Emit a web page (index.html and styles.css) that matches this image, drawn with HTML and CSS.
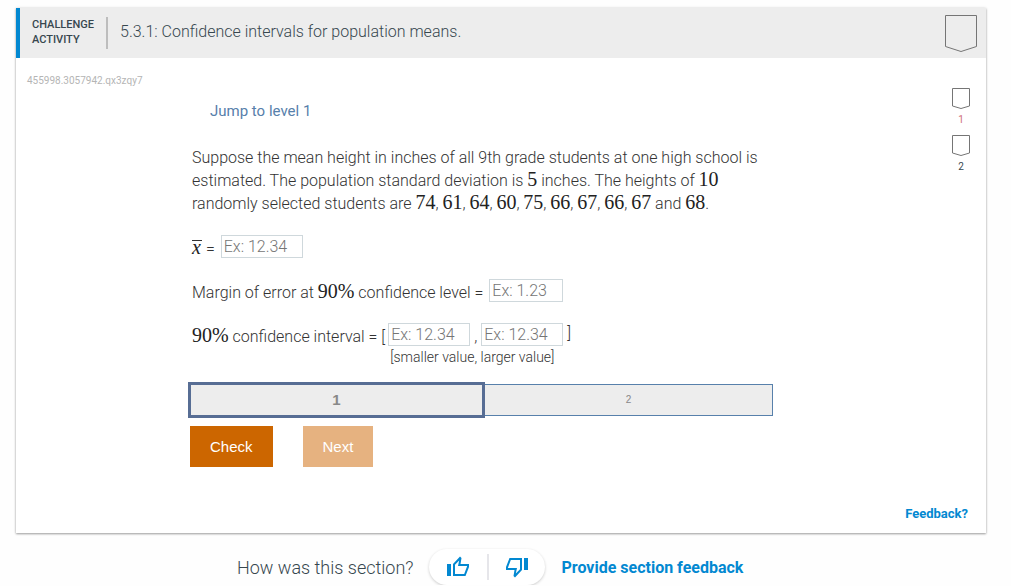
FILE: index.html
```html
<!DOCTYPE html>
<html lang="en">
<head>
<meta charset="utf-8">
<meta name="viewport" content="width=device-width, initial-scale=1">
<title>5.3.1: Confidence intervals for population means.</title>
<link rel="stylesheet" href="styles.css">
</head>
<body>
<main class="page">
  <section class="card">
    <header class="card-header">
      <div class="activity-type">Challenge<br>activity</div>
      <h1 class="activity-title">5.3.1: Confidence intervals for population means.</h1>
      <svg class="badge-large" viewBox="0 0 32 38" aria-hidden="true"><path d="M.5 1.5h31v31L16 37.5.5 32.5z"/></svg>
    </header>
    <div class="card-body">
      <div class="activity-id">455998.3057942.qx3zqy7</div>
      <div class="activity">
        <a class="jump" href="#level-1">Jump to level 1</a>
        <form class="question">
          <p class="prompt">Suppose the mean height in inches of all 9th grade students at one high school is estimated. The population standard deviation is <span class="math">5</span> inches. The heights of <span class="math">10</span> randomly selected students are <span class="math">74</span>, <span class="math">61</span>, <span class="math">64</span>, <span class="math">60</span>, <span class="math">75</span>, <span class="math">66</span>, <span class="math">67</span>, <span class="math">66</span>, <span class="math">67</span> and <span class="math">68</span>.</p>
          <div class="row">
            <label for="mean"><span class="math x-bar">x</span> =</label>
            <input class="answer" id="mean" type="text" placeholder="Ex: 12.34">
          </div>
          <div class="row">
            <label for="margin">Margin of error at <span class="math">90%</span> confidence level =</label>
            <input class="answer answer-short" id="margin" type="text" placeholder="Ex: 1.23">
          </div>
          <div class="row row-interval">
            <label for="lower"><span class="math">90%</span> confidence interval = [</label>
            <div class="interval">
              <div class="interval-fields">
                <input class="answer" id="lower" type="text" placeholder="Ex: 12.34">
                <span class="comma">,</span>
                <input class="answer" type="text" placeholder="Ex: 12.34" aria-label="Larger value">
                <span class="bracket">]</span>
              </div>
              <div class="hint">[smaller value, larger value]</div>
            </div>
          </div>
        </form>
        <div class="levels">
          <div class="level level-current">1</div>
          <div class="level">2</div>
        </div>
        <div class="actions">
          <button class="button" type="button">Check</button>
          <button class="button button-next" type="button" disabled>Next</button>
        </div>
      </div>
      <div class="rail">
        <div class="step step-current"><svg class="badge" viewBox="0 0 18 22" aria-hidden="true"><path d="M.5.5h17v17.5L9 20.5.5 18z"/></svg>1</div>
        <div class="step"><svg class="badge" viewBox="0 0 18 22" aria-hidden="true"><path d="M.5.5h17v17.5L9 20.5.5 18z"/></svg>2</div>
      </div>
    </div>
    <footer class="card-footer"><a class="feedback" href="#feedback">Feedback?</a></footer>
  </section>
  <section class="rating">
    <span class="rating-text">How was this section?</span>
    <div class="thumbs">
      <button class="thumb" type="button" aria-label="Thumbs up"><svg viewBox="0 0 24 24"><path d="M1 9h4v12H1zM23 10v2l-3.5 9H7V9l7-7.5 1.5 1.5L14.5 9H23zM9 9.8V19h9.2l2.8-7.4V11h-9l1.2-5.4z"/></svg></button>
      <button class="thumb thumb-down" type="button" aria-label="Thumbs down"><svg viewBox="0 0 24 24"><path d="M1 9h4v12H1zM23 10v2l-3.5 9H7V9l7-7.5 1.5 1.5L14.5 9H23zM9 9.8V19h9.2l2.8-7.4V11h-9l1.2-5.4z"/></svg></button>
    </div>
    <a class="section-feedback" href="#section-feedback">Provide section feedback</a>
  </section>
</main>
</body>
</html>
```

FILE: styles.css
```css
* {
  box-sizing: border-box;
}

body {
  margin: 0;
  background: #fefefe;
  color: #37474f;
  font-family: Roboto, sans-serif;
  font-size: 16px;
  font-weight: 300;
}

a {
  text-decoration: none;
}

.page {
  padding: 8px 25px 0 16px;
}

.card {
  background: #fff;
  box-shadow: 0 1px 2px rgba(0, 0, 0, .35), 0 0 3px rgba(0, 0, 0, .12);
}

.card-header {
  display: flex;
  align-items: center;
  height: 50px;
  padding-right: 9px;
  border-left: 4px solid #0288d1;
  background: #ededed;
}

.activity-type {
  width: 88px;
  padding: 0 0 2px 12px;
  border-right: 2px solid #bdbdbd;
  font-size: 11px;
  font-weight: 500;
  line-height: 15px;
  text-transform: uppercase;
}

.activity-title {
  flex: 1;
  margin: 0;
  padding: 0 0 4px 12px;
  font-size: 16px;
  font-weight: 300;
}

.badge-large {
  width: 32px;
  height: 38px;
}

.badge-large path,
.badge path {
  fill: none;
  stroke: #757575;
}

.card-body {
  display: grid;
  grid-template-columns: 172px minmax(0, 585px) 1fr;
  padding-top: 16px;
}

.activity-id {
  padding-left: 11px;
  color: #b5b5b5;
  font-size: 10px;
  font-weight: 400;
  line-height: 14px;
}

.activity {
  padding-top: 27px;
}

.jump {
  display: block;
  padding-left: 22px;
  color: #5780ab;
  font-size: 15px;
  font-weight: 400;
  line-height: 20px;
}

.question {
  padding: 26px 0 0 4px;
  color: #333;
}

.prompt {
  margin: 0 0 20px;
  line-height: 22px;
}

.math {
  color: #222;
  font-family: "Liberation Serif", serif;
  font-size: 20px;
  font-weight: 400;
  line-height: 20px;
}

.row {
  display: flex;
  align-items: flex-start;
  gap: 6px;
  margin-bottom: 19px;
}

.row label {
  padding-top: 3px;
  line-height: 22px;
}

.row .math {
  line-height: 16px;
}

.row .x-bar {
  display: inline-block;
  width: 10px;
  font-style: italic;
  line-height: 12px;
  border-top: 1px solid #333;
}

.row-interval {
  gap: 3px;
  margin-bottom: 14px;
}

.answer {
  width: 82px;
  height: 23px;
  padding: 0 2px;
  border: 1px solid #cfd8dc;
  background: #fff;
  font: inherit;
}

.answer-short {
  width: 74px;
}

.answer::placeholder {
  color: #757575;
  opacity: 1;
}

.interval-fields {
  display: flex;
  gap: 4px;
}

.comma {
  padding-top: 4px;
}

.hint {
  padding-left: 2px;
  font-size: 14px;
  line-height: 22px;
}

.levels {
  display: flex;
  align-items: center;
}

.level {
  flex: 1;
  height: 32px;
  border: 1px solid #5780ab;
  border-left: 0;
  background: #ededed;
  color: #888;
  font-family: "Liberation Sans", sans-serif;
  font-size: 10px;
  font-weight: 400;
  line-height: 30px;
  text-align: center;
}

.level-current {
  flex: 0 0 297px;
  height: 36px;
  border: 3px solid #576d94;
  font-size: 15px;
  font-weight: 700;
}

.actions {
  display: flex;
  gap: 30px;
  padding: 8px 2px 0;
}

.button {
  height: 41px;
  padding: 0 20px;
  border: 0;
  background: #cc6600;
  color: #fff;
  font: 400 15px "Liberation Sans", sans-serif;
}

.button-next {
  background: #e6b280;
}

.rail {
  display: flex;
  flex-direction: column;
  align-items: flex-end;
  gap: 9px;
  padding: 14px 16px 0 0;
}

.step {
  display: flex;
  flex-direction: column;
  align-items: center;
  gap: 3px;
  font-size: 10px;
  font-weight: 400;
  line-height: 13px;
}

.step-current {
  color: #d07078;
}

.badge {
  width: 18px;
  height: 22px;
}

.card-footer {
  padding: 38px 18px 10px;
  font-size: 13px;
  line-height: 18px;
  text-align: right;
}

.feedback,
.section-feedback {
  color: #0288d1;
  font-weight: 700;
}

.rating {
  display: flex;
  align-items: center;
  gap: 16px;
  padding: 16px 0 0 221px;
}

.rating-text {
  font-size: 18px;
}

.thumbs {
  display: flex;
  padding: 5px 0;
  border-radius: 18px;
  background: #fff;
  box-shadow: 0 1px 3px rgba(0, 0, 0, .2);
}

.thumb {
  width: 58px;
  height: 26px;
  padding: 1px 0 0;
  border: 0;
  background: none;
}

.thumb svg {
  width: 24px;
  height: 24px;
  fill: #0288d1;
}

.thumb-down {
  border-left: 2px solid #e6e6ea;
}

.thumb-down svg {
  transform: rotate(180deg);
}
```
